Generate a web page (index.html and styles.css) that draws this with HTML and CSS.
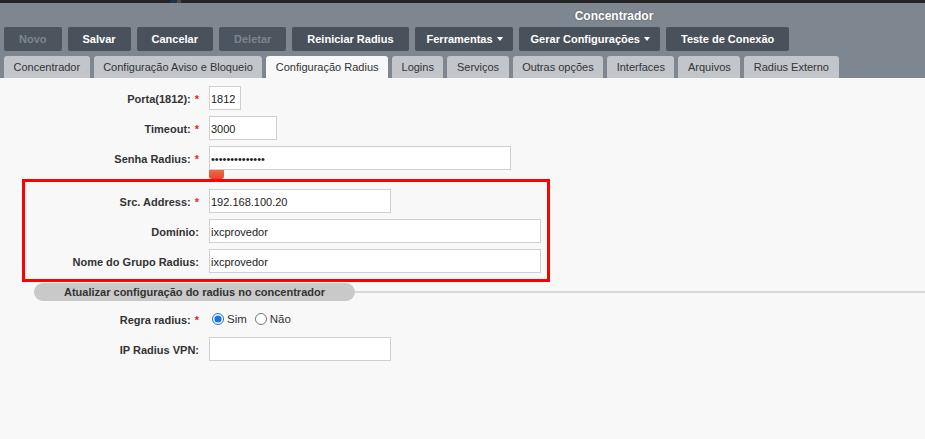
FILE: index.html
```html
<!DOCTYPE html>
<html lang="pt-BR">
<head>
<meta charset="utf-8">
<title>Concentrador</title>
<link rel="stylesheet" href="styles.css">
</head>
<body>
<div class="topstrip"><span class="ts-gap"></span><span class="ts-blue"></span><span class="ts-gray"></span></div>
<header class="header">
  <div class="title">Concentrador</div>
  <div class="toolbar">
    <button class="btn disabled">Novo</button>
    <button class="btn">Salvar</button>
    <button class="btn">Cancelar</button>
    <button class="btn disabled">Deletar</button>
    <button class="btn">Reiniciar Radius</button>
    <button class="btn has-caret">Ferramentas<span class="caret"></span></button>
    <button class="btn has-caret">Gerar Configurações<span class="caret"></span></button>
    <button class="btn">Teste de Conexão</button>
  </div>
  <nav class="tabs">
    <span class="tab">Concentrador</span>
    <span class="tab">Configuração Aviso e Bloqueio</span>
    <span class="tab active">Configuração Radius</span>
    <span class="tab">Logins</span>
    <span class="tab">Serviços</span>
    <span class="tab">Outras opções</span>
    <span class="tab">Interfaces</span>
    <span class="tab">Arquivos</span>
    <span class="tab">Radius Externo</span>
  </nav>
</header>
<main class="content">
  <div class="row"><label class="lbl">Porta(1812):<span class="req">*</span></label><input class="inp w-porta" value="1812"></div>
  <div class="row"><label class="lbl">Timeout:<span class="req">*</span></label><input class="inp w-timeout" value="3000"></div>
  <div class="row"><label class="lbl">Senha Radius:<span class="req">*</span></label><input class="inp w-senha" type="password" value="abcdefghijklmn"></div>
  <div class="strength"></div>
  <div class="highlight">
    <div class="row"><label class="lbl">Src. Address:<span class="req">*</span></label><input class="inp w-short" value="192.168.100.20"></div>
    <div class="row"><label class="lbl">Domínio:</label><input class="inp w-long" value="ixcprovedor"></div>
    <div class="row"><label class="lbl">Nome do Grupo Radius:</label><input class="inp w-long" value="ixcprovedor"></div>
  </div>
  <div class="section"><span class="pill">Atualizar configuração do radius no concentrador</span><span class="sline"></span></div>
  <div class="row"><label class="lbl">Regra radius:<span class="req">*</span></label>
    <span class="radios">
      <label class="opt"><input type="radio" name="regra" checked>Sim</label>
      <label class="opt"><input type="radio" name="regra">Não</label>
    </span>
  </div>
  <div class="row"><label class="lbl">IP Radius VPN:</label><input class="inp w-short" value=""></div>
</main>
</body>
</html>
```

FILE: styles.css
```css
* { box-sizing: border-box; }
html, body { margin: 0; padding: 0; }
body {
  font-family: "Liberation Sans", Arial, sans-serif;
  font-size: 11px;
  color: #333;
  background: #f8f8f8;
  width: 925px;
  height: 439px;
  overflow: hidden;
}
.topstrip {
  height: 3px;
  background: #242424;
  display: flex;
}
.ts-gap { width: 170px; }
.ts-blue { width: 7px; background: #1d3346; }
.ts-gray { width: 4px; background: #4a4a4a; }

.header {
  background: #7e878f;
  padding: 0 0 0 4px;
}
.title {
  height: 24px;
  line-height: 26px;
  padding-left: 299px;
  text-align: center;
  font-size: 12px;
  font-weight: bold;
  color: #fff;
  text-shadow: 0 0 2px rgba(0,0,0,0.35);
}
.toolbar {
  display: flex;
  gap: 6px;
  height: 24px;
}
.btn {
  font-family: inherit;
  font-size: 11px;
  font-weight: bold;
  color: #fff;
  background: #49525b;
  border: 0;
  border-radius: 2px;
  padding: 0 15px;
  height: 24px;
  display: flex;
  align-items: center;
}
.btn.has-caret { padding: 0 10px 0 12px; }
.btn.disabled { color: #7c858d; background: #4c555e; }
.caret {
  display: inline-block;
  margin-left: 4px;
  border-top: 4px solid #fff;
  border-left: 3px solid transparent;
  border-right: 3px solid transparent;
}
.tabs {
  display: flex;
  gap: 4px;
  margin-top: 5px;
  height: 22px;
}
.tab {
  background: #c2c6cb;
  color: #333;
  padding: 0 9.5px;
  border-radius: 3px 3px 0 0;
  line-height: 23px;
  font-size: 11px;
}
.tab.active { background: #f8f8f8; }

.content { padding-top: 8px; }
.row {
  display: flex;
  align-items: center;
  height: 24px;
  margin-bottom: 6px;
}
.lbl {
  width: 200px;
  text-align: right;
  font-weight: bold;
  font-size: 11px;
  color: #333;
  padding-right: 1px;
  margin-right: 9px;
  padding-top: 2px;
}
.req { color: #e8262c; margin-left: 4px; }
.inp {
  height: 24px;
  border: 1px solid #cfcfcf;
  background: #fff;
  font-family: "Liberation Sans", Arial, sans-serif;
  font-size: 11px;
  color: #222;
  padding: 2px 1px 0 1px;
  outline: none;
}
.w-porta { width: 32px; }
.w-timeout { width: 68px; }
.w-senha { width: 302px; }
.w-short { width: 182px; }
.w-long { width: 332px; }

.strength {
  margin-top: -6px;
  margin-left: 209px;
  width: 15px;
  height: 9px;
  background: linear-gradient(#f26a45, #e8452a);
  border-radius: 0 0 3px 3px;
}
.highlight {
  margin-left: 22px;
  width: 528px;
  border: 3px solid #ff0000;
  padding: 7px 0 0 0;
  height: 103px;
}
.highlight .lbl { width: 175px; }
.highlight .row:last-child { margin-bottom: 0; }

.section {
  display: flex;
  align-items: center;
  margin-top: 1px;
  height: 18px;
}
.pill {
  margin-left: 34px;
  width: 321px;
  height: 18px;
  line-height: 18px;
  background: #c9c9c9;
  border-radius: 9px;
  padding-left: 30px;
  font-weight: bold;
  font-size: 11px;
  color: #333;
  white-space: nowrap;
}
.sline {
  flex: 1;
  height: 2px;
  background: #d9d9d9;
}
.section + .row { margin-top: 6px; }
.radios { display: flex; align-items: center; gap: 5px; }
.opt {
  display: flex;
  align-items: center;
  font-size: 11.5px;
  color: #333;
}
.opt input {
  width: 12px;
  height: 12px;
  margin: 0 3px 0 3px;
  accent-color: #1a73e8;
}
```
